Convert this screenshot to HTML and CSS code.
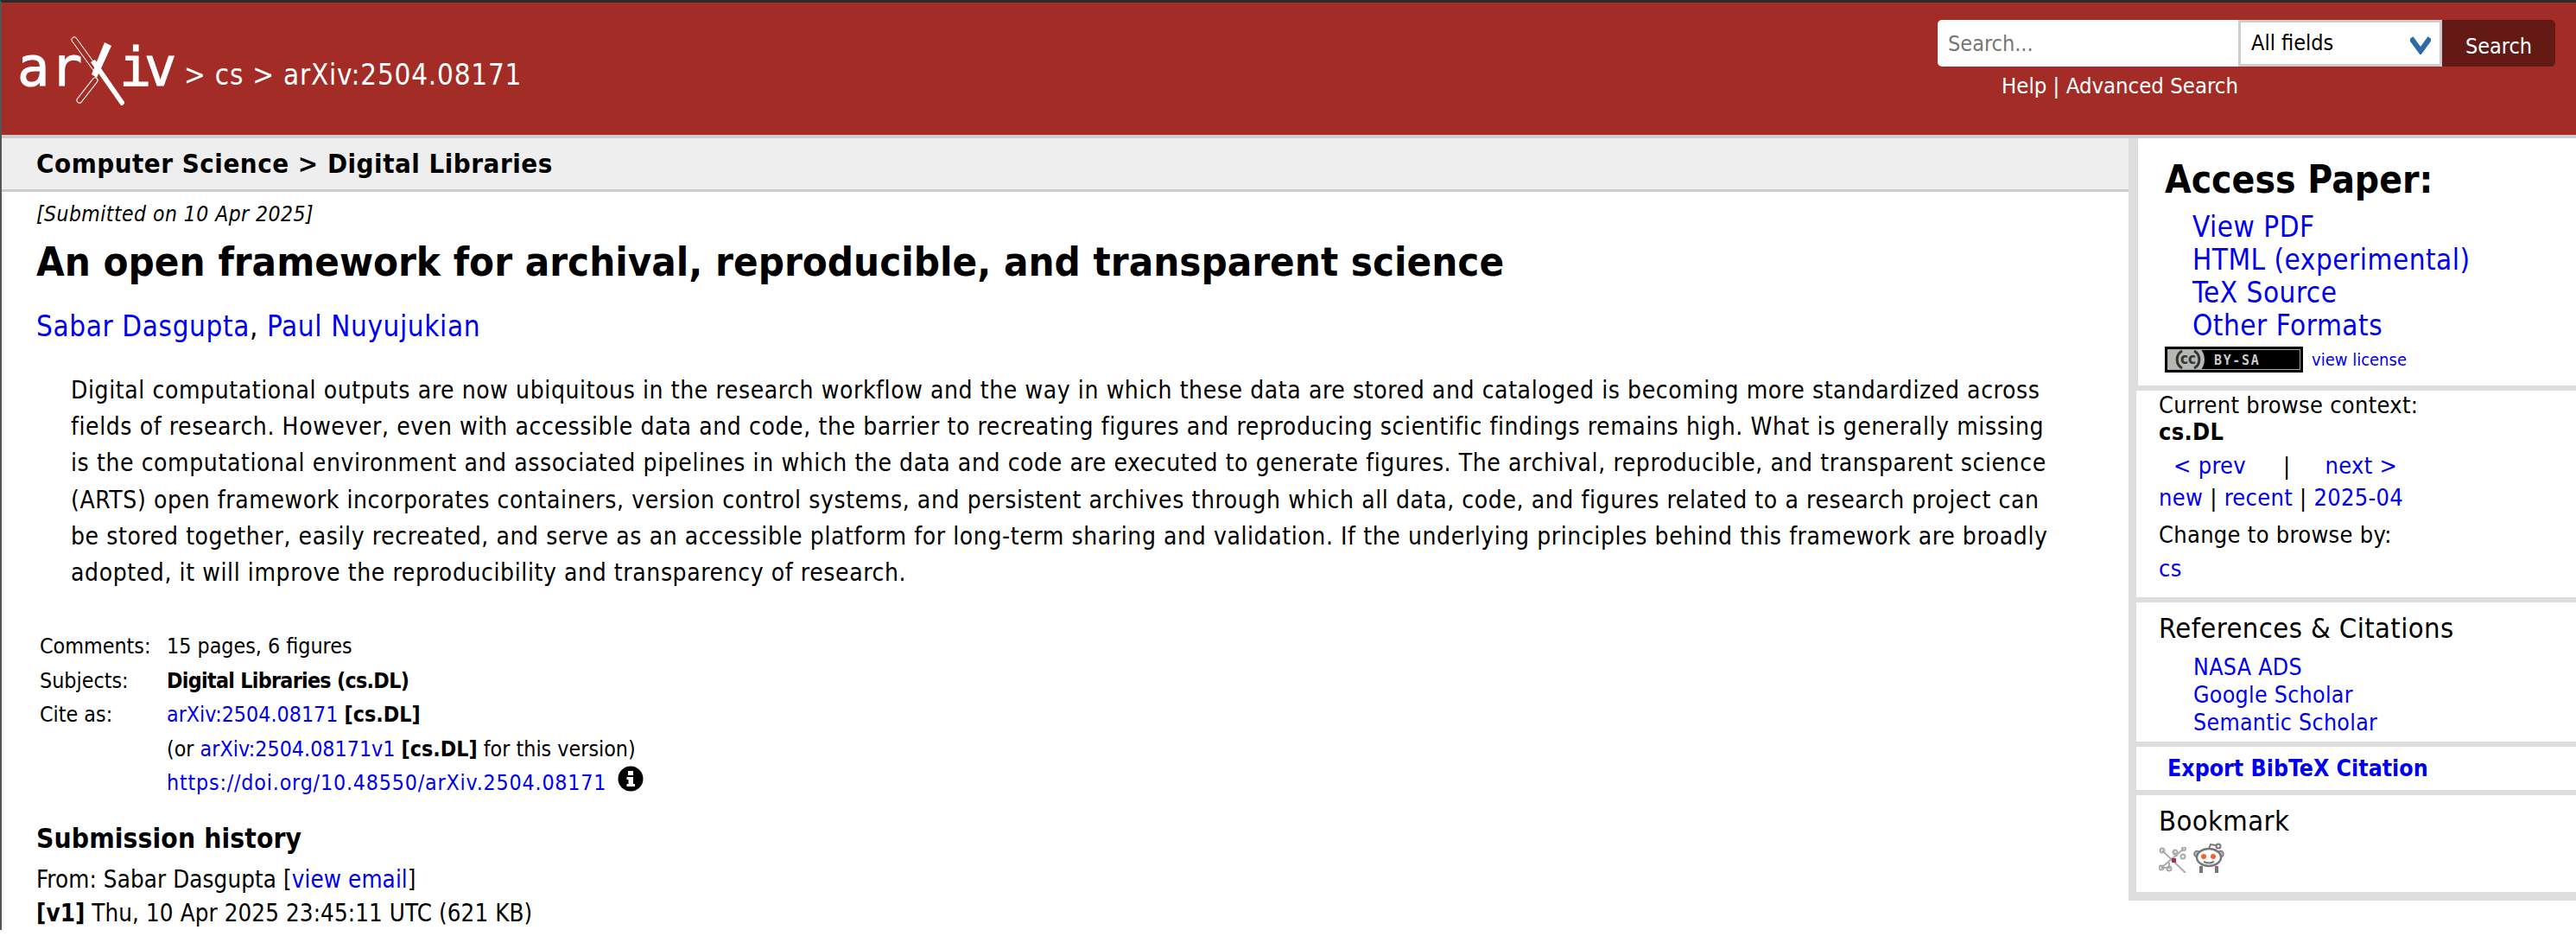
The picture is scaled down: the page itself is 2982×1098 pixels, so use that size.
FILE: index.html
```html
<!DOCTYPE html>
<html lang="en">
<head>
    <meta charset="UTF-8">
    <meta name="viewport" content="width=device-width, initial-scale=1.0">
    <title>An open framework for archival, reproducible, and transparent science</title>
    <link rel="stylesheet" href="styles.css">
</head>
<body>
    <header class="site-header">
        <div class="crumbs">
            <svg class="logo" width="190" height="90" viewBox="0 -6 190 90">
                <text class="logo-text" x="0 38" y="59">ar</text>
                <text class="logo-text" x="118 147" y="59">iv</text>
                <path class="logo-outer" d="M66 6 L90 39"/>
                <path class="logo-inner" d="M66 6 L90 39"/>
                <path class="logo-outer" d="M72 76 L90 53"/>
                <path class="logo-inner" d="M72 76 L90 53"/>
                <path d="M101 9 L109 13 L92 50 L86 46 Z" fill="#fff"/>
                <path d="M85 32 L90 29 L124 78 Q124 82 120 82 Z" fill="#fff"/>
            </svg>
            <span class="crumb-text">&gt; cs &gt; arXiv:2504.08171</span>
        </div>
        <div class="search-block">
            <form class="search-form">
                <input class="search-input" type="text" placeholder="Search...">
                <div class="search-select">
                    All fields
                    <svg class="chevron" width="24" height="22" viewBox="0 0 24 22"><path d="M1 3 L12 18 L23 3" fill="none" stroke="#2d6aa8" stroke-width="6"/></svg>
                </div>
                <button class="search-btn" type="button">Search</button>
            </form>
            <div class="search-links"><a href="#">Help</a> | <a href="#">Advanced Search</a></div>
        </div>
    </header>

    <div class="page">
        <main class="main">
            <div class="subheader">Computer Science &gt; Digital Libraries</div>
            <div class="content">
                <div class="dateline">[Submitted on 10 Apr 2025]</div>
                <h1 class="title">An open framework for archival, reproducible, and transparent science</h1>
                <div class="authors"><a href="#">Sabar Dasgupta</a>, <a href="#">Paul Nuyujukian</a></div>
                <p class="abstract">
                    Digital computational outputs are now ubiquitous in the research workflow and the way in which these data are stored and cataloged is becoming more standardized across<br>
                    fields of research. However, even with accessible data and code, the barrier to recreating figures and reproducing scientific findings remains high. What is generally missing<br>
                    is the computational environment and associated pipelines in which the data and code are executed to generate figures. The archival, reproducible, and transparent science<br>
                    (ARTS) open framework incorporates containers, version control systems, and persistent archives through which all data, code, and figures related to a research project can<br>
                    be stored together, easily recreated, and serve as an accessible platform for long-term sharing and validation. If the underlying principles behind this framework are broadly<br>
                    adopted, it will improve the reproducibility and transparency of research.
                </p>
                <div class="meta">
                    <div class="meta-label">Comments:</div>
                    <div>15 pages, 6 figures</div>
                    <div class="meta-label">Subjects:</div>
                    <div class="subject"><b>Digital Libraries (cs.DL)</b></div>
                    <div class="meta-label">Cite as:</div>
                    <div><a href="#">arXiv:2504.08171</a> <b>[cs.DL]</b></div>
                    <div class="meta-label"></div>
                    <div>(or <a href="#">arXiv:2504.08171v1</a> <b>[cs.DL]</b> for this version)</div>
                    <div class="meta-label"></div>
                    <div class="doi-row">
                        <a class="doi-link" href="#">https://doi.org/10.48550/arXiv.2504.08171</a>
                        <svg class="info-icon" width="30" height="30" viewBox="0 0 30 30">
                            <circle cx="15" cy="15" r="14.5" fill="#000"/>
                            <rect x="12" y="6" width="6" height="5" fill="#fff"/>
                            <path d="M10.5 13 H18 V21 H20 V24 H10.5 V21 H12.5 V16 H10.5 Z" fill="#fff"/>
                        </svg>
                    </div>
                </div>
                <h2 class="history-title">Submission history</h2>
                <div class="history">
                    From: Sabar Dasgupta [<a href="#">view email</a>]<br>
                    <b>[v1]</b> Thu, 10 Apr 2025 23:45:11 UTC (621 KB)
                </div>
            </div>
        </main>

        <aside class="sidebar">
            <section class="side-box access-box">
                <h2 class="access-title">Access Paper:</h2>
                <ul class="access-list">
                    <li><a href="#">View PDF</a></li>
                    <li><a href="#">HTML (experimental)</a></li>
                    <li><a href="#">TeX Source</a></li>
                    <li><a href="#">Other Formats</a></li>
                </ul>
                <div class="license-row">
                    <svg class="cc-badge" width="160" height="30" viewBox="0 0 160 30">
                        <rect width="160" height="30" fill="#000"/>
                        <rect x="3" y="3" width="154" height="24" fill="#aaa"/>
                        <rect x="4" y="4" width="152" height="22" fill="#000"/>
                        <rect x="4" y="4" width="36" height="22" fill="#b5b8b2"/>
                        <circle cx="27" cy="15" r="19" fill="#b5b8b2"/>
                        <rect x="4" y="0" width="50" height="4" fill="#aaa"/>
                        <rect x="4" y="26" width="50" height="4" fill="#aaa"/>
                        <rect x="0" y="0" width="60" height="3" fill="#000"/>
                        <rect x="0" y="27" width="60" height="3" fill="#000"/>
                        <path d="M20 5 A11.5 11.5 0 0 0 20 25 M34 5 A11.5 11.5 0 0 1 34 25" fill="none" stroke="#333" stroke-width="3"/>
                        <text class="cc-text" x="27" y="20" text-anchor="middle">cc</text>
                        <text class="by-text" x="57" y="21" textLength="52">BY-SA</text>
                    </svg>
                    <a class="license-link" href="#">view license</a>
                </div>
            </section>
            <section class="side-box context-box">
                <div>Current browse context:</div>
                <div class="context-name">cs.DL</div>
                <div class="prevnext"><a href="#">&lt; prev</a><span>|</span><a href="#">next &gt;</a></div>
                <div class="recent"><a href="#">new</a> | <a href="#">recent</a> | <a href="#">2025-04</a></div>
                <div class="change-label">Change to browse by:</div>
                <div class="change-link"><a href="#">cs</a></div>
            </section>
            <section class="side-box refs-box">
                <h3 class="side-title">References &amp; Citations</h3>
                <ul class="refs-list">
                    <li><a href="#">NASA ADS</a></li>
                    <li><a href="#">Google Scholar</a></li>
                    <li><a href="#">Semantic Scholar</a></li>
                </ul>
            </section>
            <section class="side-box export-box"><a href="#">Export BibTeX Citation</a></section>
            <section class="side-box bookmark-box">
                <h3 class="side-title">Bookmark</h3>
                <div class="bookmark-icons">
                    <svg width="32" height="30" viewBox="0 0 32 30" fill="none" stroke="#aaa" stroke-width="2">
                        <path d="M4 4 L31 30 M3 24 L29 2 M12 25 L12 18 M18 6 L21 11 M3 24 H12"/>
                        <circle cx="4" cy="4" r="2.5"/>
                        <circle cx="3" cy="24" r="2.5"/>
                        <circle cx="12" cy="25" r="2.5"/>
                        <circle cx="19" cy="6" r="2.5"/>
                        <circle cx="29" cy="2" r="2"/>
                        <circle cx="28" cy="11" r="2.5"/>
                        <rect x="15" y="13" width="5" height="5" fill="#a3305c" stroke="none"/>
                    </svg>
                    <svg width="36" height="35" viewBox="0 0 36 35" fill="none" stroke="#777" stroke-width="2.5">
                        <path d="M9 27 V35 M27 27 V35" stroke-width="4"/>
                        <circle cx="4.5" cy="13" r="3.5" fill="#bbb" stroke-width="1.5"/>
                        <circle cx="31.5" cy="13" r="3.5" fill="#bbb" stroke-width="1.5"/>
                        <ellipse cx="18" cy="17" rx="14" ry="10" fill="#fff"/>
                        <path d="M18 7 L20 2 L26 3" stroke-width="2"/>
                        <circle cx="29" cy="4" r="2.5" stroke-width="2"/>
                        <path d="M12 22 Q18 25 24 22" stroke-width="2"/>
                        <circle cx="12" cy="16" r="3" fill="#f4622a" stroke="none"/>
                        <circle cx="23" cy="16" r="3" fill="#f4622a" stroke="none"/>
                    </svg>
                </div>
            </section>
        </aside>
    </div>
</body>
</html>
```

FILE: styles.css
```css
body {
    margin: 0;
    border-top: 3px solid #2b2b2b;
    border-left: 2px solid #555;
    font-family: "DejaVu Sans", sans-serif;
    font-stretch: condensed;
    font-size: 27px;
    letter-spacing: 0.3px;
    color: #000;
    background-color: #fff;
}

a {
    color: #0000ee;
    text-decoration: none;
}

/* header */
.site-header {
    display: flex;
    justify-content: space-between;
    height: 153px;
    background-color: #a32d26;
    color: #fff;
}

.crumbs {
    display: flex;
    align-items: flex-start;
    padding: 31px 0 0 18px;
}

.crumb-text {
    margin: 33px 0 0 3px;
    font-size: 33px;
    letter-spacing: 0.75px;
}

.logo-text {
    font-family: "DejaVu Sans Mono", monospace;
    font-stretch: normal;
    font-size: 62px;
    letter-spacing: 0;
    fill: #fff;
    stroke: #fff;
    stroke-width: 1;
}

.logo-outer,
.logo-inner {
    fill: none;
    stroke-linecap: round;
}

.logo-outer {
    stroke: #fff;
    stroke-width: 7;
}

.logo-inner {
    stroke: #a32d26;
    stroke-width: 5;
}

.search-block {
    margin: 20px 24px 0 0;
}

.search-form {
    display: flex;
    height: 54px;
}

.search-input {
    box-sizing: border-box;
    width: 348px;
    height: 54px;
    padding: 0 12px;
    border: none;
    border-radius: 5px 0 0 5px;
    font-family: inherit;
    font-stretch: condensed;
    font-size: 25px;
}

.search-input::placeholder {
    color: #777;
}

.search-select {
    position: relative;
    box-sizing: border-box;
    width: 236px;
    padding: 9px 0 0 12px;
    border: 3px solid #ccc;
    background-color: #fff;
    color: #000;
    font-size: 25px;
    letter-spacing: 0;
}

.chevron {
    position: absolute;
    top: 15px;
    right: 10px;
}

.search-btn {
    width: 131px;
    padding: 6px 0 0;
    border: none;
    border-radius: 0 5px 5px 0;
    background-color: #641a14;
    color: #fff;
    font-family: inherit;
    font-stretch: condensed;
    font-size: 25px;
}

.search-links {
    margin: 7px 0 0 74px;
    font-size: 25.5px;
    letter-spacing: 0;
}

.search-links a {
    color: #fff;
}

/* page columns */
.page {
    display: grid;
    grid-template-columns: 2462px 1fr;
    border-top: 4px solid #ccc;
}

.subheader {
    box-sizing: border-box;
    height: 62px;
    padding: 11px 0 0 40px;
    border-bottom: 3px solid #ccc;
    background-color: #eee;
    font-size: 31px;
    font-weight: bold;
    letter-spacing: 0.5px;
}

.content {
    padding: 11px 40px 0;
}

.dateline {
    font-size: 24.5px;
    font-style: italic;
    letter-spacing: 0.45px;
}

.title {
    margin: 12px 0 0;
    font-size: 47px;
    line-height: 58px;
    letter-spacing: 0;
}

.authors {
    margin-top: 26px;
    font-size: 33px;
    letter-spacing: 0.6px;
}

.abstract {
    margin: 34px 0 0 40px;
    font-size: 28px;
    line-height: 42.2px;
    letter-spacing: 0.6px;
    white-space: nowrap;
}

.meta {
    display: grid;
    grid-template-columns: 147px 1fr;
    grid-auto-rows: 39.5px;
    margin: 49px 0 0 4px;
    font-size: 24.8px;
    letter-spacing: 0;
}

.subject {
    letter-spacing: -0.7px;
}

.doi-row {
    display: flex;
    align-items: flex-start;
    gap: 13px;
}

.doi-link {
    letter-spacing: 0.8px;
}

.info-icon {
    margin-top: -5px;
}

.history-title {
    margin: 21px 0 0;
    font-size: 31.5px;
    letter-spacing: 0.1px;
}

.history {
    margin-top: 10px;
    font-size: 27.5px;
    line-height: 39px;
    letter-spacing: 0.1px;
}

/* sidebar */
.sidebar {
    display: flex;
    flex-direction: column;
    gap: 6px;
    align-self: start;
    padding: 0 0 10px 9px;
    background-color: #ddd;
}

.side-box {
    box-sizing: border-box;
    padding-left: 26px;
    background-color: #fff;
}

.access-box {
    height: 286px;
    margin-left: 2px;
    padding: 24px 0 0 31px;
}

.access-title {
    margin: 0;
    font-size: 44px;
    line-height: 48px;
    letter-spacing: 0;
}

.access-list {
    margin: 12px 0 0;
    padding: 0 0 0 32px;
    list-style: none;
    font-size: 33px;
    line-height: 38px;
    letter-spacing: 0.5px;
}

.license-row {
    display: flex;
    align-items: center;
    gap: 10px;
    margin-top: 5px;
}

.license-link {
    font-size: 20px;
    letter-spacing: 0;
}

.cc-text {
    font-family: "DejaVu Sans", sans-serif;
    font-weight: bold;
    font-size: 17px;
    letter-spacing: 0;
    fill: #333;
}

.by-text {
    font-family: "DejaVu Sans Mono", monospace;
    font-weight: bold;
    font-size: 15px;
    fill: #ccc;
}

.context-box {
    height: 239px;
    padding-top: 1px;
}

.context-name {
    font-weight: bold;
}

.prevnext {
    display: flex;
    margin: 8px 0 0 17px;
}

.prevnext span {
    margin: 0 40px 0 43px;
    color: #000;
}

.recent {
    margin-top: 6px;
}

.change-label {
    margin-top: 12px;
}

.change-link {
    margin-top: 8px;
}

.side-title {
    margin: 0;
    font-size: 32.5px;
    font-weight: normal;
    letter-spacing: 0.4px;
}

.refs-box {
    height: 161px;
    padding-top: 11px;
}

.refs-list {
    margin: 10px 0 0;
    padding: 0 0 0 40px;
    list-style: none;
    font-size: 26.5px;
    line-height: 32px;
}

.export-box {
    height: 50px;
    padding: 9px 0 0 36px;
    font-size: 26.5px;
    font-weight: bold;
    letter-spacing: 0;
}

.bookmark-box {
    height: 112px;
    padding-top: 11px;
}

.bookmark-icons {
    display: flex;
    align-items: flex-end;
    gap: 8px;
    margin-top: 6px;
}
```
